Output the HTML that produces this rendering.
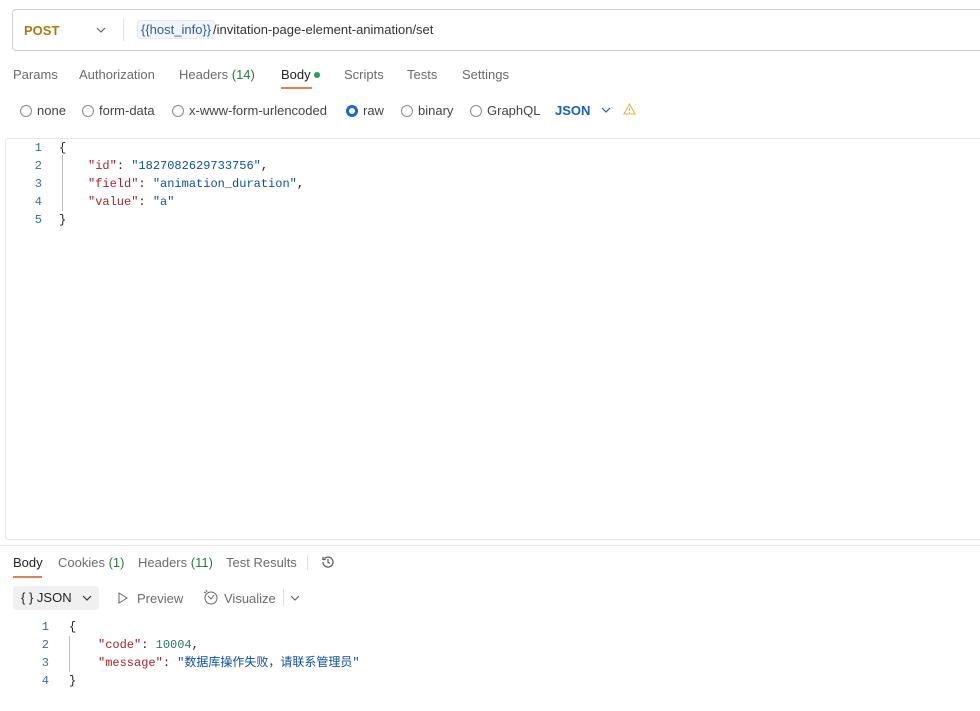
<!DOCTYPE html>
<html><head><meta charset="utf-8"><style>
*{box-sizing:border-box;margin:0;padding:0}
body{width:980px;height:711px;background:#fff;font-family:"Liberation Sans","Noto Sans CJK SC",sans-serif;font-size:13px;color:#212121;position:relative;overflow:hidden}
.a{position:absolute;white-space:nowrap}
.mono{font-family:"Liberation Mono","Noto Sans CJK SC",monospace;font-size:12px}
.g{color:#6b6b6b}
.radio{display:inline-block;width:12px;height:12px;border:1px solid #8a8a8a;border-radius:50%;vertical-align:-2px;margin-right:5px}
.ln{color:#3d6b95;text-align:right;width:12px}
.k{color:#a3242b}.s{color:#0c4f9c}.n{color:#2a7a64}
</style></head><body>
<div class="a" style="left:12px;top:9px;width:980px;height:42px;border:1px solid #cfcfcf;border-radius:4px"></div>
<div class="a" style="left:24px;top:23px;color:#a77a15;font-weight:bold;font-size:13px">POST</div>
<svg class="a" style="left:96px;top:26px" width="10" height="8"><path d="M1 2l4 4 4-4" stroke="#666" fill="none" stroke-width="1.2"/></svg>
<div class="a" style="left:123px;top:18px;width:1px;height:23px;background:#e0e0e0"></div>
<div class="a" style="left:137px;top:20px;height:19px;padding:2px 3px;background:#f2f5fa;border:1px solid #e3e8f0;border-radius:3px;color:#2f5c9c;line-height:13px">{{host_info}}</div>
<div class="a" style="left:213px;top:22px;color:#333">/invitation-page-element-animation/set</div>

<div class="a g" style="left:13px;top:67px">Params</div>
<div class="a g" style="left:79px;top:67px">Authorization</div>
<div class="a g" style="left:179px;top:67px">Headers <span style="color:#2a7a3a">(14)</span></div>
<div class="a" style="left:281px;top:67px;color:#222">Body <span style="display:inline-block;width:6px;height:6px;border-radius:50%;background:#22a04b;vertical-align:1px"></span></div>
<div class="a" style="left:281px;top:87px;width:31px;height:2px;background:#e07f5c"></div>
<div class="a g" style="left:344px;top:67px">Scripts</div>
<div class="a g" style="left:407px;top:67px">Tests</div>
<div class="a g" style="left:462px;top:67px">Settings</div>

<div class="a" style="left:20px;top:103px;color:#444"><span class="radio"></span>none</div>
<div class="a" style="left:82px;top:103px;color:#444"><span class="radio"></span>form-data</div>
<div class="a" style="left:172px;top:103px;color:#444"><span class="radio"></span>x-www-form-urlencoded</div>
<div class="a" style="left:346px;top:103px;color:#444"><span class="radio" style="border:3px solid #1a6ac9"></span>raw</div>
<div class="a" style="left:401px;top:103px;color:#444"><span class="radio"></span>binary</div>
<div class="a" style="left:470px;top:103px;color:#444"><span class="radio"></span>GraphQL</div>
<div class="a" style="left:555px;top:103px;color:#1a5fb4;font-weight:bold">JSON</div>
<svg class="a" style="left:601px;top:106px" width="10" height="8"><path d="M1 2l4 4 4-4" stroke="#1a5fb4" fill="none" stroke-width="1.2"/></svg>
<svg class="a" style="left:623px;top:103px" width="13" height="12"><path d="M6.5 1L12 11H1z" stroke="#e0b030" fill="none"/><path d="M6.5 5v3M6.5 9v1" stroke="#e0b030"/></svg>

<div class="a" style="left:5px;top:138px;width:980px;height:402px;border:1px solid #e6e6e6;border-radius:3px"></div>
<div class="a mono" style="left:0;top:139px;line-height:18px">
<div style="display:flex"><div class="ln" style="margin-left:30px">1</div><div style="margin-left:17px">{</div></div>
<div style="display:flex"><div class="ln" style="margin-left:30px">2</div><div style="margin-left:17px;padding-left:29px"><span class="k">"id"</span>: <span class="s">"1827082629733756"</span>,</div></div>
<div style="display:flex"><div class="ln" style="margin-left:30px">3</div><div style="margin-left:17px;padding-left:29px"><span class="k">"field"</span>: <span class="s">"animation_duration"</span>,</div></div>
<div style="display:flex"><div class="ln" style="margin-left:30px">4</div><div style="margin-left:17px;padding-left:29px"><span class="k">"value"</span>: <span class="s">"a"</span></div></div>
<div style="display:flex"><div class="ln" style="margin-left:30px">5</div><div style="margin-left:17px">}</div></div>
</div>
<div class="a" style="left:62px;top:155px;width:1px;height:56px;background:#bbb"></div>

<div class="a" style="left:0;top:545px;width:980px;height:1px;background:#e6e6e6"></div>
<div class="a" style="left:13px;top:555px;color:#222">Body</div>
<div class="a" style="left:13px;top:576px;width:29px;height:2px;background:#e07f5c"></div>
<div class="a g" style="left:58px;top:555px">Cookies <span style="color:#2a7a3a">(1)</span></div>
<div class="a g" style="left:138px;top:555px">Headers <span style="color:#2a7a3a">(11)</span></div>
<div class="a g" style="left:226px;top:555px">Test Results</div>
<div class="a" style="left:307px;top:555px;width:1px;height:15px;background:#ddd"></div>
<svg class="a" style="left:320px;top:554px" width="16" height="16"><path d="M3 8a5 5 0 1 0 1.5-3.5M3 3v2.5h2.5M8 5v3.2l2 1.3" stroke="#555" fill="none" stroke-width="1.2"/></svg>

<div class="a" style="left:13px;top:586px;width:86px;height:24px;background:#f0f0f0;border-radius:4px"></div>
<div class="a" style="left:21px;top:590px;color:#222;font-size:13px">{ }&nbsp;JSON</div>
<svg class="a" style="left:82px;top:594px" width="10" height="8"><path d="M1 2l4 4 4-4" stroke="#333" fill="none" stroke-width="1.2"/></svg>
<svg class="a" style="left:117px;top:591px" width="12" height="14"><path d="M2 2l8 5-8 5z" stroke="#666" fill="none"/></svg>
<div class="a g" style="left:137px;top:591px">Preview</div>
<svg class="a" style="left:202px;top:589px" width="17" height="17"><circle cx="9" cy="9" r="6" stroke="#666" fill="none"/><path d="M6 7l3 3 3-4M2 3l2 1M4 1l1 2" stroke="#666" fill="none"/></svg>
<div class="a g" style="left:224px;top:591px">Visualize</div>
<div class="a" style="left:283px;top:589px;width:1px;height:17px;background:#ddd"></div>
<svg class="a" style="left:290px;top:594px" width="10" height="8"><path d="M1 2l4 4 4-4" stroke="#666" fill="none" stroke-width="1.2"/></svg>

<div class="a mono" style="left:0;top:618px;line-height:18px">
<div style="display:flex"><div class="ln" style="margin-left:37px">1</div><div style="margin-left:20px">{</div></div>
<div style="display:flex"><div class="ln" style="margin-left:37px">2</div><div style="margin-left:20px;padding-left:29px"><span class="k">"code"</span>: <span class="n">10004</span>,</div></div>
<div style="display:flex"><div class="ln" style="margin-left:37px">3</div><div style="margin-left:20px;padding-left:29px"><span class="k">"message"</span>: <span class="s">"数据库操作失败，请联系管理员"</span></div></div>
<div style="display:flex"><div class="ln" style="margin-left:37px">4</div><div style="margin-left:20px">}</div></div>
</div>
<div class="a" style="left:69px;top:636px;width:1px;height:36px;background:#bbb"></div>
</body></html>
